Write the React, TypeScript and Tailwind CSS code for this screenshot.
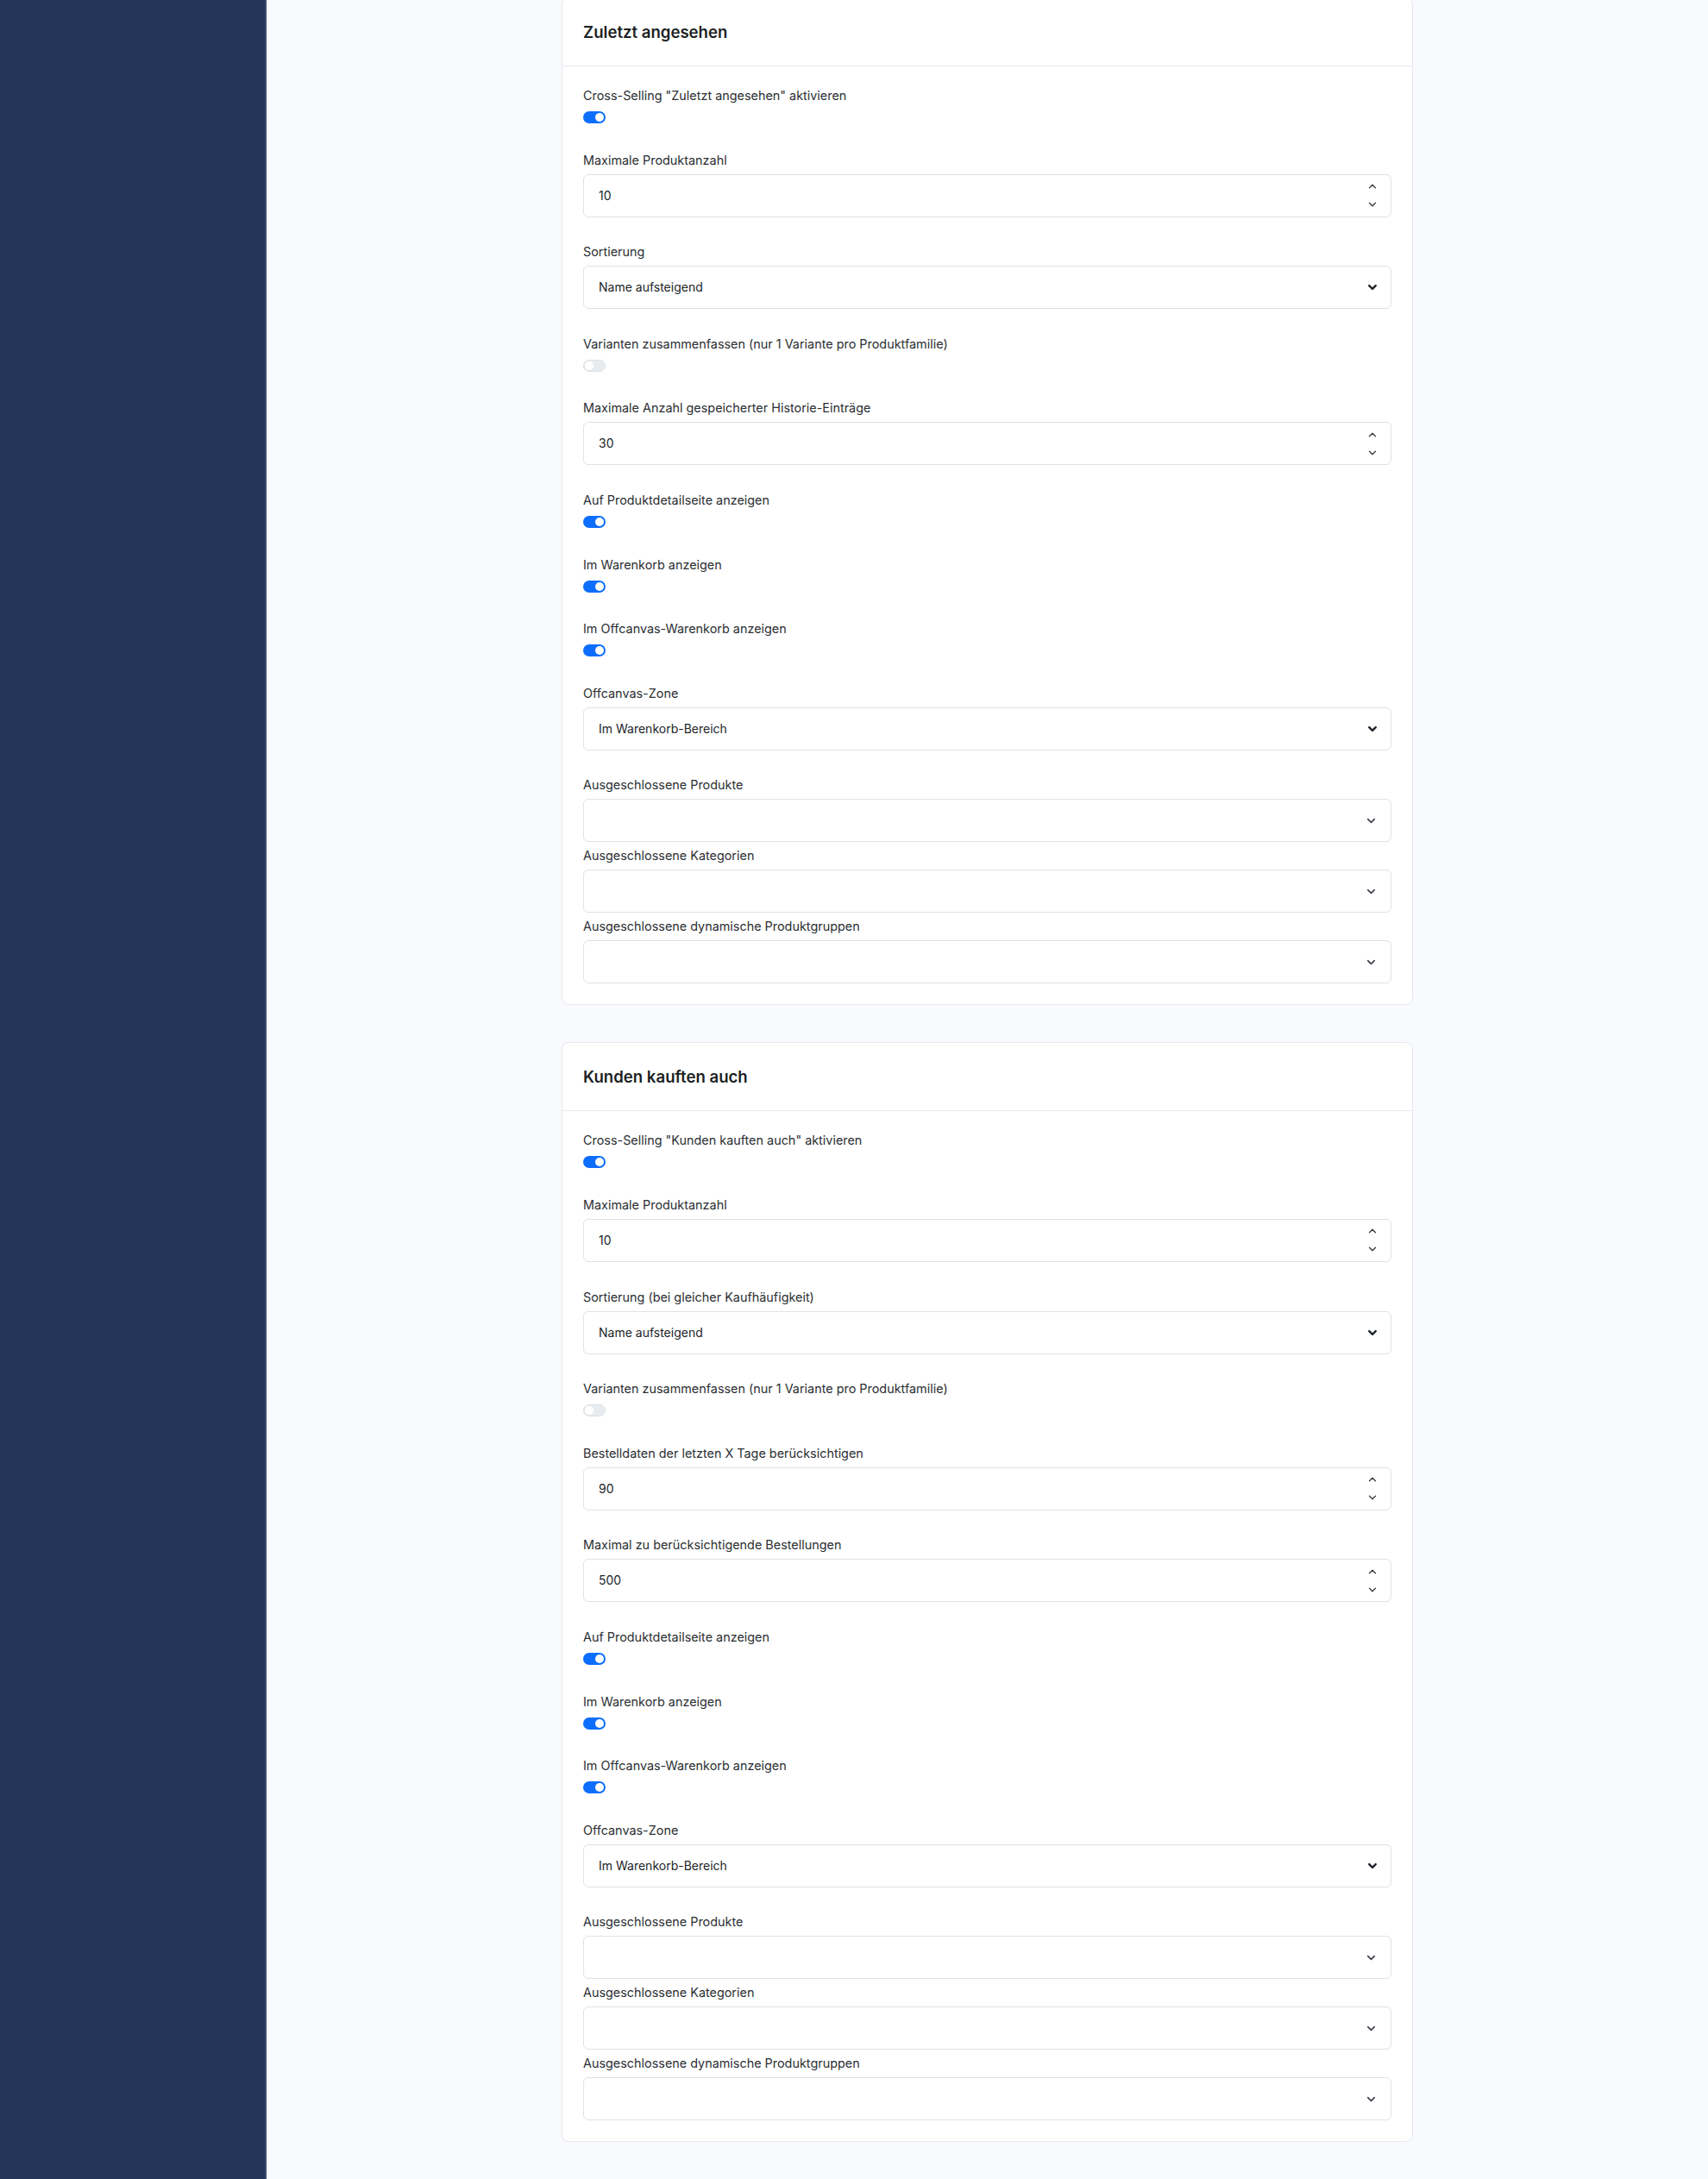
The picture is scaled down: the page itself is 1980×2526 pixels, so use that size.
import React from "react";
import { ChevronDown, ChevronUp } from "lucide-react";

type Field =
  | { kind: "toggle"; label: string; on: boolean }
  | { kind: "number"; label: string; value: string }
  | { kind: "select"; label: string; value: string }
  | { kind: "multi"; label: string };

const recentFields: Field[] = [
  { kind: "toggle", label: 'Cross-Selling "Zuletzt angesehen" aktivieren', on: true },
  { kind: "number", label: "Maximale Produktanzahl", value: "10" },
  { kind: "select", label: "Sortierung", value: "Name aufsteigend" },
  { kind: "toggle", label: "Varianten zusammenfassen (nur 1 Variante pro Produktfamilie)", on: false },
  { kind: "number", label: "Maximale Anzahl gespeicherter Historie-Einträge", value: "30" },
  { kind: "toggle", label: "Auf Produktdetailseite anzeigen", on: true },
  { kind: "toggle", label: "Im Warenkorb anzeigen", on: true },
  { kind: "toggle", label: "Im Offcanvas-Warenkorb anzeigen", on: true },
  { kind: "select", label: "Offcanvas-Zone", value: "Im Warenkorb-Bereich" },
  { kind: "multi", label: "Ausgeschlossene Produkte" },
  { kind: "multi", label: "Ausgeschlossene Kategorien" },
  { kind: "multi", label: "Ausgeschlossene dynamische Produktgruppen" },
];

const boughtFields: Field[] = [
  { kind: "toggle", label: 'Cross-Selling "Kunden kauften auch" aktivieren', on: true },
  { kind: "number", label: "Maximale Produktanzahl", value: "10" },
  { kind: "select", label: "Sortierung (bei gleicher Kaufhäufigkeit)", value: "Name aufsteigend" },
  { kind: "toggle", label: "Varianten zusammenfassen (nur 1 Variante pro Produktfamilie)", on: false },
  { kind: "number", label: "Bestelldaten der letzten X Tage berücksichtigen", value: "90" },
  { kind: "number", label: "Maximal zu berücksichtigende Bestellungen", value: "500" },
  { kind: "toggle", label: "Auf Produktdetailseite anzeigen", on: true },
  { kind: "toggle", label: "Im Warenkorb anzeigen", on: true },
  { kind: "toggle", label: "Im Offcanvas-Warenkorb anzeigen", on: true },
  { kind: "select", label: "Offcanvas-Zone", value: "Im Warenkorb-Bereich" },
  { kind: "multi", label: "Ausgeschlossene Produkte" },
  { kind: "multi", label: "Ausgeschlossene Kategorien" },
  { kind: "multi", label: "Ausgeschlossene dynamische Produktgruppen" },
];

const Toggle: React.FC<{ on: boolean }> = ({ on }) => (
  <div className="flex h-[18px] items-center">
    {on ? (
      <div className="flex h-[14px] w-[26px] items-center justify-end rounded-full bg-[#0d6efd] px-[2px]">
        <div className="h-[10px] w-[10px] rounded-full bg-white" />
      </div>
    ) : (
      <div className="flex h-[14px] w-[26px] items-center justify-start rounded-full border border-[#dcdfe4] bg-[#e9ecef] px-[1px]">
        <div className="h-[10px] w-[10px] rounded-full bg-white" />
      </div>
    )}
  </div>
);

const SelectChevron: React.FC = () => (
  <svg width="12" height="12" viewBox="0 0 16 16" fill="none">
    <path d="m3 5.5 5 5 5-5" stroke="#212529" strokeWidth="3.2" strokeLinecap="round" strokeLinejoin="round" />
  </svg>
);

const FieldRow: React.FC<{ field: Field; last: boolean }> = ({ field, last }) => {
  const spacing = last ? "" : field.kind === "multi" ? "mb-[6px]" : "mb-[30.6px]";
  return (
    <div className={spacing}>
      <div className="text-[14.4px] leading-5 text-[#2b2f33]">{field.label}</div>
      <div className="mt-[6px]">
        {field.kind === "toggle" && <Toggle on={field.on} />}
        {field.kind === "number" && (
          <div className="flex h-[50px] items-center justify-between rounded-md border border-[#dee2e6] bg-white pl-[17px] pr-[14px]">
            <span className="text-sm text-[#212529]">{field.value}</span>
            <div className="flex flex-col items-center text-[#343a40]">
              <ChevronUp size={14} strokeWidth={2.2} />
              <ChevronDown size={14} strokeWidth={2.2} className="mt-[7px]" />
            </div>
          </div>
        )}
        {field.kind === "select" && (
          <div className="flex h-[50px] items-center justify-between rounded-md border border-[#dee2e6] bg-white pl-[17px] pr-[15px]">
            <span className="text-sm text-[#212529]">{field.value}</span>
            <SelectChevron />
          </div>
        )}
        {field.kind === "multi" && (
          <div className="flex h-[50px] items-center justify-end rounded-md border border-[#dee2e6] bg-white pr-[15px]">
            <ChevronDown size={15} strokeWidth={2.4} className="text-[#343a40]" />
          </div>
        )}
      </div>
    </div>
  );
};

const SettingsCard: React.FC<{ title: string; fields: Field[] }> = ({ title, fields }) => (
  <section className="w-[987px] rounded-lg border border-[#e6e8ec] bg-white">
    <div className="border-b border-[#e6e8ec] px-6 py-[25px]">
      <h2 className="text-[18.6px] font-semibold leading-7 text-[#1c1f23]">{title}</h2>
    </div>
    <div className="p-6">
      {fields.map((field, index) => (
        <FieldRow key={index} field={field} last={index === fields.length - 1} />
      ))}
    </div>
  </section>
);

export default function App() {
  return (
    <div className="flex min-h-screen font-['Inter',sans-serif]">
      {/* Sidebar */}
      <aside className="w-[309px] shrink-0 border-r-2 border-[#3d4d6b] bg-[#233659]" />

      {/* Main */}
      <main className="flex flex-1 flex-col items-center gap-[43px] bg-[#f8fafd] pb-[40px]">
        <div className="-mt-[3px]">
          <SettingsCard title="Zuletzt angesehen" fields={recentFields} />
        </div>
        <SettingsCard title="Kunden kauften auch" fields={boughtFields} />
      </main>
    </div>
  );
}
